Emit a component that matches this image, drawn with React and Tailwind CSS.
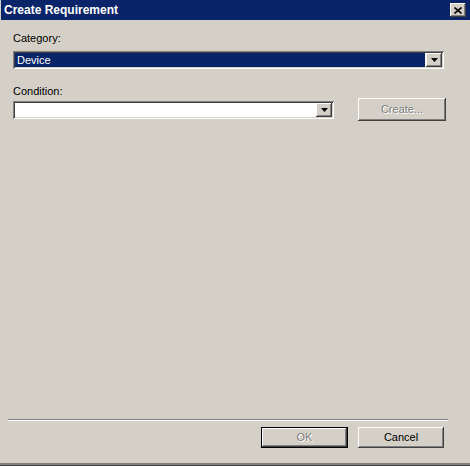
import React from "react";

const raised =
  "shadow-[inset_-1px_-1px_#404040,inset_1px_1px_#ffffff,inset_-2px_-2px_#808080,inset_2px_2px_#d4d0c8]";
const sunken =
  "shadow-[inset_1px_1px_#808080,inset_-1px_-1px_#ffffff,inset_2px_2px_#404040,inset_-2px_-2px_#d4d0c8]";

function DropArrow() {
  return (
    <div
      className={`w-[16px] h-[14px] bg-[#d4d0c8] flex items-center justify-center shrink-0 ${raised}`}
    >
      <svg width="7" height="4" viewBox="0 0 7 4">
        <path d="M0 0h7L3.5 4z" fill="#000" />
      </svg>
    </div>
  );
}

function Select({ width, value, selected }) {
  return (
    <div
      className={`h-[18px] bg-white flex items-center p-[2px] ${sunken}`}
      style={{ width }}
    >
      <div
        className={`flex-1 h-full flex items-center pl-[2px] mr-[1px] ${
          selected ? "bg-[#0a246a] text-white" : ""
        }`}
      >
        {value}
      </div>
      <DropArrow />
    </div>
  );
}

function Button({ label, disabled, isDefault, className }) {
  return (
    <div
      className={`flex items-center justify-center bg-[#d4d0c8] ${
        isDefault ? "border border-black" : ""
      } ${className}`}
    >
      <div className={`w-full h-full flex items-center justify-center ${raised}`}>
        <span
          className={
            disabled ? "text-[#808080] [text-shadow:1px_1px_#ffffff]" : "text-black"
          }
        >
          {label}
        </span>
      </div>
    </div>
  );
}

export default function App() {
  return (
    <div
      className="w-[470px] h-[466px] flex flex-col bg-[#d4d0c8] text-[11px] leading-[13px] text-black"
      style={{ fontFamily: "'Liberation Sans', Arial, sans-serif" }}
    >
      <div className="h-[20px] bg-[#0a246a] flex items-center justify-between pl-[3px] pr-[4px] border-l border-[#d4d0c8]">
        <span className="text-white font-bold text-[12px]">Create Requirement</span>
        <div
          className={`w-[16px] h-[14px] bg-[#d4d0c8] flex items-center justify-center ${raised}`}
        >
          <svg width="8" height="7" viewBox="0 0 8 7">
            <path d="M0.5 0.5l7 6M7.5 0.5l-7 6" stroke="#000" strokeWidth="1.6" />
          </svg>
        </div>
      </div>

      <div className="flex-1 flex flex-col px-[13px] pt-[12px]">
        <span>Category:</span>
        <div className="mt-[6px]">
          <Select width="431px" value="Device" selected />
        </div>

        <span className="mt-[16px]">Condition:</span>
        <div className="flex items-center">
          <Select width="321px" value="" />
          <Button label="Create..." disabled className="ml-[24px] w-[88px] h-[23px]" />
        </div>

        <div className="flex-1" />

        <div className="-ml-[5px] mr-[9px] border-t border-[#808080] border-b border-b-white" />

        <div className="flex justify-end gap-[10px] mt-[6px] mb-[15px] mr-[13px]">
          <Button label="OK" disabled isDefault className="w-[87px] h-[21px]" />
          <Button label="Cancel" className="w-[86px] h-[21px]" />
        </div>
      </div>

      <div className="h-[3px] bg-[#808080] border-b border-[#404040]" />
    </div>
  );
}
